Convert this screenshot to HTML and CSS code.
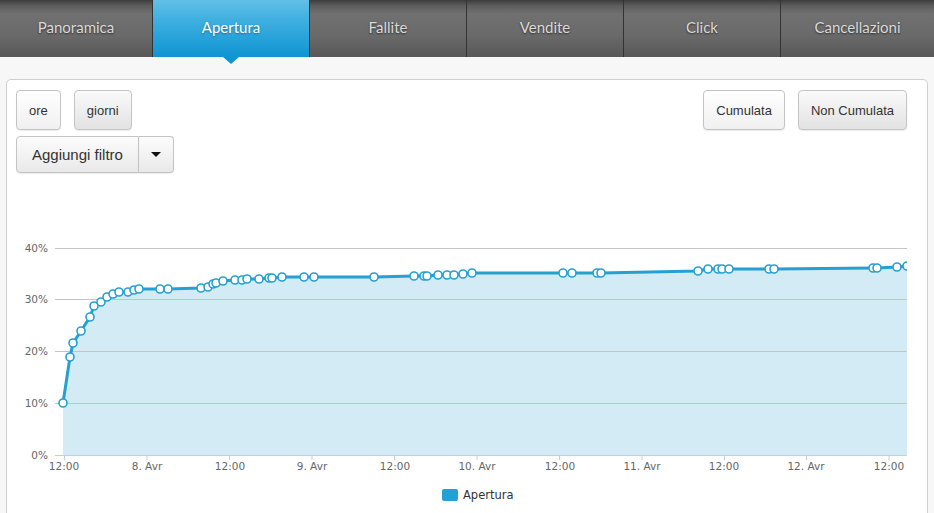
FILE: index.html
```html
<!DOCTYPE html>
<html lang="it">
<head>
<meta charset="utf-8">
<title>Statistiche</title>
<link rel="stylesheet" href="styles.css">
</head>
<body>
<nav class="tabs">
  <div class="tab">Panoramica</div>
  <div class="tab active">Apertura</div>
  <div class="tab">Fallite</div>
  <div class="tab">Vendite</div>
  <div class="tab">Click</div>
  <div class="tab">Cancellazioni</div>
</nav>
<section class="panel">
  <div class="toolbar">
    <div class="group">
      <button class="btn light">ore</button>
      <button class="btn">giorni</button>
    </div>
    <div class="group">
      <button class="btn light">Cumulata</button>
      <button class="btn">Non Cumulata</button>
    </div>
  </div>
  <div class="split">
    <button class="btn big">Aggiungi filtro</button>
    <button class="btn caret-btn"><span class="caret"></span></button>
  </div>
  <svg class="chart" width="891" height="333" viewBox="16 180 891 333" xmlns="http://www.w3.org/2000/svg">
    <path class="area" d="M63,455 L63,403 L70,357 L73,343 L81,331 L90,317 L94,306 L101,302 L107,297 L113,294 L119,292 L128,292 L134,290 L139,289 L160,289 L168,289 L201,288 L208,287 L213,284 L216,283 L223,281 L235,280 L242,280 L247,279 L259,279 L269,278 L272,278 L282,277 L304,277 L314,277 L374,277 L414,276 L424,276 L427,276 L438,275 L447,275 L454,275 L463,274 L472,273 L563,273 L572,273 L597,273 L601,273 L698,271 L708,269 L718,269 L722,269 L729,269 L769,269 L774,269 L873,268 L877,268 L897,267 L907,266 L907,455 Z"/>
    <g class="grid">
      <line x1="55" y1="248.5" x2="907" y2="248.5"/>
      <line x1="55" y1="299.5" x2="907" y2="299.5"/>
      <line x1="55" y1="351.5" x2="907" y2="351.5"/>
      <line x1="55" y1="403.5" x2="907" y2="403.5"/>
    </g>
    <g class="axis">
      <line x1="55" y1="455.5" x2="907" y2="455.5"/>
      <line x1="64.5" y1="455" x2="64.5" y2="460"/>
      <line x1="147" y1="455" x2="147" y2="460"/>
      <line x1="229.5" y1="455" x2="229.5" y2="460"/>
      <line x1="312" y1="455" x2="312" y2="460"/>
      <line x1="394.5" y1="455" x2="394.5" y2="460"/>
      <line x1="477" y1="455" x2="477" y2="460"/>
      <line x1="559.5" y1="455" x2="559.5" y2="460"/>
      <line x1="642" y1="455" x2="642" y2="460"/>
      <line x1="724.5" y1="455" x2="724.5" y2="460"/>
      <line x1="806.5" y1="455" x2="806.5" y2="460"/>
      <line x1="889" y1="455" x2="889" y2="460"/>
    </g>
    <g class="ylabels">
      <text x="48" y="252">40%</text>
      <text x="48" y="303">30%</text>
      <text x="48" y="355">20%</text>
      <text x="48" y="407">10%</text>
      <text x="48" y="459">0%</text>
    </g>
    <g class="xlabels">
      <text x="64" y="470">12:00</text>
      <text x="147" y="470">8. Avr</text>
      <text x="230" y="470">12:00</text>
      <text x="312" y="470">9. Avr</text>
      <text x="395" y="470">12:00</text>
      <text x="477" y="470">10. Avr</text>
      <text x="560" y="470">12:00</text>
      <text x="642" y="470">11. Avr</text>
      <text x="724" y="470">12:00</text>
      <text x="806" y="470">12. Avr</text>
      <text x="889" y="470">12:00</text>
    </g>
    <path class="line" d="M63,403 L70,357 L73,343 L81,331 L90,317 L94,306 L101,302 L107,297 L113,294 L119,292 L128,292 L134,290 L139,289 L160,289 L168,289 L201,288 L208,287 L213,284 L216,283 L223,281 L235,280 L242,280 L247,279 L259,279 L269,278 L272,278 L282,277 L304,277 L314,277 L374,277 L414,276 L424,276 L427,276 L438,275 L447,275 L454,275 L463,274 L472,273 L563,273 L572,273 L597,273 L601,273 L698,271 L708,269 L718,269 L722,269 L729,269 L769,269 L774,269 L873,268 L877,268 L897,267 L907,266"/>
    <g class="markers">
      <circle cx="63" cy="403" r="4"/><circle cx="70" cy="357" r="4"/><circle cx="73" cy="343" r="4"/><circle cx="81" cy="331" r="4"/><circle cx="90" cy="317" r="4"/><circle cx="94" cy="306" r="4"/><circle cx="101" cy="302" r="4"/><circle cx="107" cy="297" r="4"/><circle cx="113" cy="294" r="4"/><circle cx="119" cy="292" r="4"/><circle cx="128" cy="292" r="4"/><circle cx="134" cy="290" r="4"/><circle cx="139" cy="289" r="4"/><circle cx="160" cy="289" r="4"/><circle cx="168" cy="289" r="4"/><circle cx="201" cy="288" r="4"/><circle cx="208" cy="287" r="4"/><circle cx="213" cy="284" r="4"/><circle cx="216" cy="283" r="4"/><circle cx="223" cy="281" r="4"/><circle cx="235" cy="280" r="4"/><circle cx="242" cy="280" r="4"/><circle cx="247" cy="279" r="4"/><circle cx="259" cy="279" r="4"/><circle cx="269" cy="278" r="4"/><circle cx="272" cy="278" r="4"/><circle cx="282" cy="277" r="4"/><circle cx="304" cy="277" r="4"/><circle cx="314" cy="277" r="4"/><circle cx="374" cy="277" r="4"/><circle cx="414" cy="276" r="4"/><circle cx="424" cy="276" r="4"/><circle cx="427" cy="276" r="4"/><circle cx="438" cy="275" r="4"/><circle cx="447" cy="275" r="4"/><circle cx="454" cy="275" r="4"/><circle cx="463" cy="274" r="4"/><circle cx="472" cy="273" r="4"/><circle cx="563" cy="273" r="4"/><circle cx="572" cy="273" r="4"/><circle cx="597" cy="273" r="4"/><circle cx="601" cy="273" r="4"/><circle cx="698" cy="271" r="4"/><circle cx="708" cy="269" r="4"/><circle cx="718" cy="269" r="4"/><circle cx="722" cy="269" r="4"/><circle cx="729" cy="269" r="4"/><circle cx="769" cy="269" r="4"/><circle cx="774" cy="269" r="4"/><circle cx="873" cy="268" r="4"/><circle cx="877" cy="268" r="4"/><circle cx="897" cy="267" r="4"/><circle cx="907" cy="266" r="4"/>
    </g>
    <g class="legend">
      <rect x="442" y="489" width="16" height="12" rx="2"/>
      <text x="463" y="499">Apertura</text>
    </g>
  </svg>
</section>
</body>
</html>
```
FILE: styles.css
```css
html, body {
  margin: 0;
  padding: 0;
}
body {
  background: #f7f7f7;
  font-family: "Liberation Sans", Arial, sans-serif;
  color: #333;
  overflow: hidden;
}
.tabs {
  display: flex;
  height: 57px;
  background: #333;
  gap: 1px;
}
.tab {
  flex: 0 0 156px;
  height: 57px;
  line-height: 55px;
  text-align: center;
  font-family: Lato, "Open Sans", sans-serif;
  font-size: 15px;
  color: #d9d9d9;
  text-shadow: 0 1px 2px rgba(0,0,0,0.6);
  background: linear-gradient(to bottom, #3c3c3c 0px, #5e5e5e 6px, #707070 14px, #6a6a6a 35px, #585858 57px);
}
.tab:first-child {
  flex-basis: 152px;
}
.tab:last-child {
  flex: 1 1 auto;
}
.tab.active {
  position: relative;
  color: #fff;
  background: linear-gradient(to bottom, #62c0e7 0px, #3fafe0 20px, #0f95d2 57px);
  text-shadow: 0 1px 2px rgba(0,0,0,0.35);
}
.tab.active::after {
  content: "";
  position: absolute;
  left: 50%;
  bottom: -7px;
  margin-left: -8px;
  border-left: 8px solid transparent;
  border-right: 8px solid transparent;
  border-top: 7px solid #0f95d2;
}
.panel {
  margin: 22px 6px 0;
  background: #fff;
  border: 1px solid #cfcfcf;
  border-radius: 5px;
  padding: 10px 20px 0 9px;
  height: 440px;
  box-sizing: border-box;
}
.toolbar {
  display: flex;
  justify-content: space-between;
}
.group {
  display: flex;
  gap: 13px;
}
.btn {
  font-family: "Liberation Sans", Arial, sans-serif;
  font-size: 13px;
  color: #333;
  height: 40px;
  padding: 0 12px;
  border: 1px solid #c4c4c4;
  border-radius: 4px;
  background: linear-gradient(to bottom, #fafafa 0%, #e2e2e2 100%);
  box-shadow: inset 0 1px 0 rgba(255,255,255,0.2), 0 1px 1px rgba(0,0,0,0.08);
  margin: 0;
}
.btn.light {
  background: linear-gradient(to bottom, #ffffff 0%, #f0f0f0 100%);
}
.split {
  display: flex;
  margin-top: 6px;
}
.btn.big {
  font-size: 15px;
  height: 37px;
  padding: 0 15px;
  border-radius: 4px 0 0 4px;
  background: linear-gradient(to bottom, #fcfcfc 0%, #e9e9e9 100%);
}
.btn.caret-btn {
  height: 37px;
  width: 35px;
  padding: 0;
  border-left: 0;
  border-radius: 0 4px 4px 0;
  background: linear-gradient(to bottom, #fcfcfc 0%, #e9e9e9 100%);
  display: flex;
  align-items: center;
  justify-content: center;
}
.caret {
  display: block;
  width: 0;
  height: 0;
  border-left: 5px solid transparent;
  border-right: 5px solid transparent;
  border-top: 5px solid #111;
}
.chart {
  display: block;
  margin-top: 7px;
}
.grid line {
  stroke: #c4c4c4;
  stroke-width: 1;
}
.area {
  fill: #d3ebf5;
}
.axis line {
  stroke: #c0d0e0;
  stroke-width: 1;
}
.ylabels text {
  font-family: "DejaVu Sans", Verdana, sans-serif;
  font-size: 10.5px;
  fill: #666;
  text-anchor: end;
}
.xlabels text {
  font-family: "DejaVu Sans", Verdana, sans-serif;
  font-size: 10.5px;
  fill: #666;
  text-anchor: middle;
}
.line {
  fill: none;
  stroke: #25a0d3;
  stroke-width: 3;
  stroke-linejoin: round;
}
.markers circle {
  fill: #fff;
  stroke: #25a0d3;
  stroke-width: 1.6;
}
.legend rect {
  fill: #25a0d3;
}
.legend text {
  font-family: "DejaVu Sans", Verdana, sans-serif;
  font-size: 11.5px;
  fill: #333;
}
```
